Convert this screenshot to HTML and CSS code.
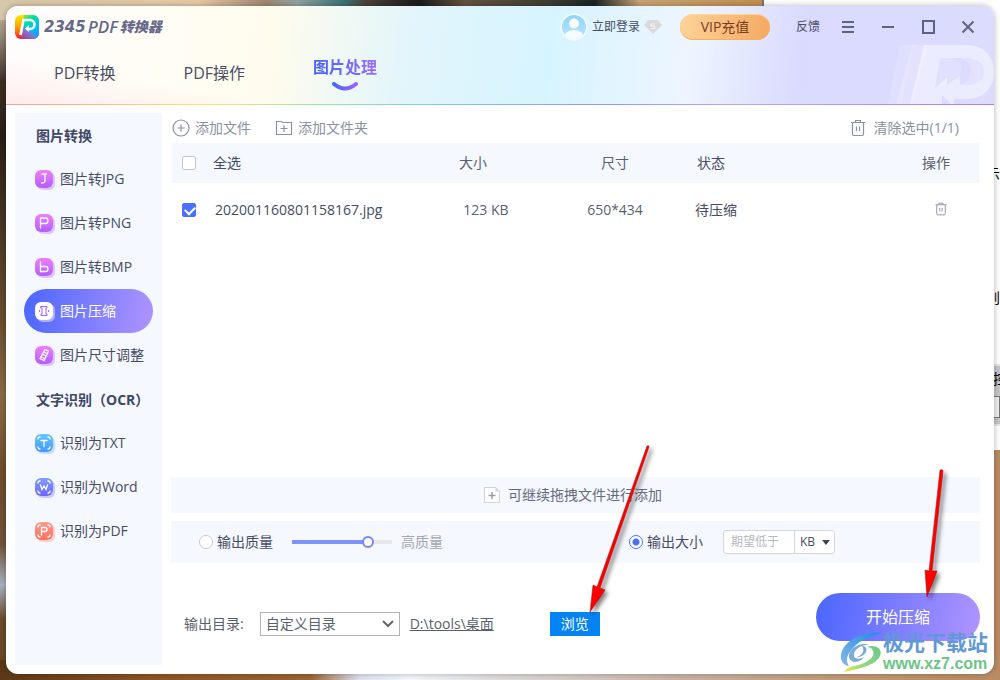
FILE: index.html
```html
<!DOCTYPE html>
<html lang="zh-CN">
<head>
<meta charset="utf-8">
<title>2345PDF转换器</title>
<link rel="stylesheet" href="styles.css">
</head>
<body>
<div class="back-window" aria-hidden="true">
  <span class="frag frag-a">【</span>
  <span class="frag frag-b">示</span>
  <span class="frag frag-c">则</span>
  <div class="back-panel"><span class="frag-d">控</span><i></i></div>
</div>
<div class="app">
  <header class="header">
    <svg class="header-art" width="110" height="59" viewBox="0 0 110 59" aria-hidden="true">
      <g fill="#fff">
        <path opacity=".12" d="M16 0H30L18 59H4Z"/>
        <path opacity=".2" d="M28 0H44L28 59H12Z"/>
        <path opacity=".45" fill-rule="evenodd" d="M40 0H83C99 0 110 11 110 27S99 54 83 54H70V59H67L58 50V59H26ZM56 13L51 44L63 32V40L76 31V40H83C93 40 100 35 100 27S93 13 83 13Z"/>
        <path opacity=".15" d="M56 13H68C82 15 80 36 64 39L51 44Z"/>
        <path opacity=".2" d="M76 13H83C93 13 100 19 100 27S93 40 84 40H76C90 36 91 18 76 13Z"/>
      </g>
    </svg>
    <div class="titlebar">
      <svg class="logo" width="24" height="24" viewBox="0 0 24 24" aria-hidden="true">
        <defs>
          <linearGradient id="lg1" x1="0" y1="0" x2="0" y2="1"><stop offset="0" stop-color="#ffe600"/><stop offset=".5" stop-color="#ffa400"/><stop offset="1" stop-color="#ff1226"/></linearGradient>
          <linearGradient id="lg2" x1="0" y1="0" x2=".6" y2="1"><stop offset="0" stop-color="#c8e800"/><stop offset=".35" stop-color="#00e0a0"/><stop offset=".75" stop-color="#00bdf5"/><stop offset="1" stop-color="#169cff"/></linearGradient>
          <linearGradient id="lg3" x1="0" y1="1" x2="1" y2="0"><stop offset="0" stop-color="#f2124c"/><stop offset=".5" stop-color="#8a70d8"/><stop offset="1" stop-color="#20b8f8"/></linearGradient>
        </defs>
        <rect width="24" height="24" rx="6" fill="url(#lg1)"/>
        <path d="M9 0H18a6 6 0 0 1 6 6V18a6 6 0 0 1-6 6H6Z" fill="url(#lg2)"/>
        <path d="M5 24L9 11L22 22Q20 24 17 24Z" fill="url(#lg3)" opacity=".85"/>
        <path d="M5.500 20L8.500 5M7 5H15A4.500 4.500 0 0 1 15 14H13" fill="none" stroke="#fff" stroke-width="2.600"/>
        <path d="M14 10V17L10 13.500Z" fill="#fff"/>
      </svg>
      <h1 class="brand"><span class="brand-num">2345</span><span class="brand-pdf">PDF</span><span class="brand-cn">转换器</span></h1>
      <button class="login" type="button">
        <svg width="28" height="28" viewBox="0 0 28 28" aria-hidden="true">
          <defs><linearGradient id="av" x1="0" y1="0" x2="0" y2="1"><stop offset="0" stop-color="#8fd3ff"/><stop offset="1" stop-color="#b9e6ff"/></linearGradient><clipPath id="avc"><circle cx="14" cy="14" r="12"/></clipPath></defs>
          <circle cx="14" cy="14" r="13.500" fill="#f4fcff"/><circle cx="14" cy="14" r="12" fill="url(#av)"/>
          <g clip-path="url(#avc)" fill="#f6fcff"><circle cx="14" cy="10.500" r="5"/><ellipse cx="14" cy="25" rx="10" ry="8"/></g>
        </svg>
        <span>立即登录</span>
        <svg width="18" height="14" viewBox="0 0 18 14" aria-hidden="true"><path d="M4 0H14L18 5L9 14L0 5Z" fill="#d9d9d9"/><path d="M11 4H8Q6.500 4 7 5.500L10.500 6.500Q11.500 8.500 9.500 8.500H7" fill="none" stroke="#f4f4f4" stroke-width="1.200"/></svg>
      </button>
      <button class="vip" type="button">VIP充值</button>
      <button class="feedback" type="button">反馈</button>
      <div class="controls">
        <button type="button" aria-label="菜单"><svg width="14" height="14" viewBox="0 0 14 14"><path d="M1 2H13M1 7H13M1 12H13"/></svg></button>
        <button type="button" aria-label="最小化"><svg width="14" height="14" viewBox="0 0 14 14"><path d="M1 7H13"/></svg></button>
        <button type="button" aria-label="最大化"><svg width="14" height="14" viewBox="0 0 14 14"><path d="M2 1H13V13H2Z"/></svg></button>
        <button type="button" aria-label="关闭"><svg width="14" height="14" viewBox="0 0 14 14"><path d="M1.500 1.500L12.500 12.500M12.500 1.500L1.500 12.500"/></svg></button>
      </div>
    </div>
    <nav class="tabs">
      <button class="tab" type="button">PDF转换</button>
      <button class="tab" type="button">PDF操作</button>
      <button class="tab tab-active" type="button"><span>图片处理</span>
        <svg width="28" height="10" viewBox="0 0 28 10" aria-hidden="true"><defs><linearGradient id="sm"><stop offset="0" stop-color="#4566ff"/><stop offset="1" stop-color="#9a66ff"/></linearGradient></defs><path d="M3 2Q14 11 25 2" fill="none" stroke="url(#sm)" stroke-width="4" stroke-linecap="round"/></svg>
      </button>
    </nav>
  </header>
  <div class="body">
    <aside class="sidebar">
      <h2>图片转换</h2>
      <button class="item" type="button"><svg class="ico ico-purple" viewBox="0 0 18 18"><path d="M7 4H11.500M10 4V10.500Q10 13 6.500 13"/></svg>图片转JPG</button>
      <button class="item" type="button"><svg class="ico ico-purple" viewBox="0 0 18 18"><path d="M5.500 14V4H10.500Q13 4 13 6.700T10.500 9.500H5.500"/></svg>图片转PNG</button>
      <button class="item" type="button"><svg class="ico ico-purple" viewBox="0 0 18 18"><path d="M5.500 4V13.500H10.500Q13 13.500 13 11T10.500 8.500H5.500"/></svg>图片转BMP</button>
      <button class="item item-active" type="button"><svg class="ico ico-white" viewBox="0 0 18 18"><path d="M6 4.500H12V6H11V12H12V13.500H6V12H7V6H6ZM4.500 8.500V9.500M13.500 8.500V9.500"/></svg>图片压缩</button>
      <button class="item" type="button"><svg class="ico ico-purple" viewBox="0 0 18 18"><path d="M10 3.500L13.500 5L9 14.500L5 12.500ZM9 6L11 7M8 8.500L10 9.500M6.500 11L8.500 12"/></svg>图片尺寸调整</button>
      <h2>文字识别（OCR）</h2>
      <button class="item" type="button"><svg class="ico ico-sky" viewBox="0 0 18 18"><path d="M3 5Q3 3 5 3M13 3Q15 3 15 5M15 13Q15 15 13 15M5 15Q3 15 3 13M6 6.500H12M9 6.500V12.500"/></svg>识别为TXT</button>
      <button class="item" type="button"><svg class="ico ico-indigo" viewBox="0 0 18 18"><path d="M3 5Q3 3 5 3M13 3Q15 3 15 5M15 13Q15 15 13 15M5 15Q3 15 3 13M5.500 7L7 11.500L9 8L11 11.500L12.500 7"/></svg>识别为Word</button>
      <button class="item" type="button"><svg class="ico ico-coral" viewBox="0 0 18 18"><path d="M3 5Q3 3 5 3M13 3Q15 3 15 5M15 13Q15 15 13 15M5 15Q3 15 3 13M6.500 13V5.500H10Q12 5.500 12 7.500T10 9.500H6.500"/></svg>识别为PDF</button>
    </aside>
    <main class="main">
      <div class="toolbar">
        <button type="button"><svg width="18" height="18" viewBox="0 0 18 18"><circle cx="9" cy="9" r="8"/><path d="M5.500 9H12.500M9 5.500V12.500"/></svg>添加文件</button>
        <button type="button"><svg width="18" height="18" viewBox="0 0 18 18"><path d="M1.500 2.500H6.500L8 3.500H16.500V15.500H1.500ZM5.500 9.500H12.500M9 6V13"/></svg>添加文件夹</button>
        <button class="clear" type="button"><svg width="16" height="18" viewBox="0 0 16 18"><path d="M1 3.500H15M5.500 3V1.500H10.500V3M2.500 4V15Q2.500 16.500 4 16.500H12Q13.500 16.500 13.500 15V4M6.500 7.500V12M9.500 7.500V12"/></svg>清除选中(1/1)</button>
      </div>
      <table class="files">
        <colgroup><col class="c-check"><col><col class="c-size"><col class="c-dim"><col class="c-state"><col class="c-op"></colgroup>
        <thead>
          <tr><th><input type="checkbox" id="all" aria-label="全选"></th><th class="l"><label for="all">全选</label></th><th class="size">大小</th><th>尺寸</th><th class="l state">状态</th><th>操作</th></tr>
        </thead>
        <tbody>
          <tr><td><input type="checkbox" id="f1" checked></td><td class="l"><label for="f1">202001160801158167.jpg</label></td><td class="size">123 KB</td><td>650*434</td><td class="l state">待压缩</td><td class="op"><button type="button" aria-label="删除"><svg width="14" height="14" viewBox="0 0 16 18"><path d="M1 3.500H15M5.500 3V1.500H10.500V3M2.500 4V15Q2.500 16.500 4 16.500H12Q13.500 16.500 13.500 15V4M6.500 7.500V12M9.500 7.500V12"/></svg></button></td></tr>
        </tbody>
      </table>
      <button class="drop" type="button"><svg width="16" height="16" viewBox="0 0 16 16"><path d="M.500 .500H12L15.500 4V15.500H.500Z" fill="#fff" stroke="#cfd2d8"/><path d="M11.500 .500V4.500H15.500Z" fill="#cfd2d8"/><path d="M4.500 8.500H11.500M8 5V12" stroke="#9a9da8" stroke-width="1.500"/></svg>可继续拖拽文件进行添加</button>
      <div class="options">
        <div class="group">
          <input type="radio" name="mode" id="quality"><label for="quality">输出质量</label>
          <input class="slider" type="range" min="0" max="100" value="79" aria-label="质量"><span class="muted">高质量</span>
        </div>
        <div class="group">
          <input type="radio" name="mode" id="size" checked><label for="size">输出大小</label>
          <div class="limit">
            <input type="text" placeholder="期望低于" aria-label="期望低于">
            <div class="pick"><select aria-label="单位"><option>KB</option><option>MB</option></select><svg width="8" height="5" viewBox="0 0 8 5"><path d="M0 0H8L4 5Z" fill="#3d4257"/></svg></div>
          </div>
        </div>
      </div>
      <footer class="footer">
        <div class="output">
          <label for="dir">输出目录:</label>
          <div class="pick pick-dir"><select id="dir"><option>自定义目录</option><option>原文件目录</option></select><svg width="12" height="8" viewBox="0 0 12 8"><path d="M1 1L6 6L11 1" fill="none" stroke="#666" stroke-width="2"/></svg></div>
          <a href="#">D:\tools\桌面</a>
          <button class="browse" type="button">浏览</button>
        </div>
        <button class="start" type="button">开始压缩</button>
      </footer>
    </main>
  </div>
</div>
<svg class="arrows" width="400" height="250" viewBox="0 0 400 250" aria-hidden="true">
  <g fill="#f00" stroke="#a00808" stroke-width=".5">
    <path d="M65 16Q67 15 67 17L18 158L23 160L8 182L11 155L15 157Z"/>
    <path d="M358 40Q361 39 361 41L350 141L355 141L345 167L343 140L347 141Z"/>
  </g>
</svg>
<div class="site-mark" aria-hidden="true">
  <svg width="42" height="40" viewBox="0 0 42 40">
    <defs><linearGradient id="sw1" x1="1" y1="0" x2="0" y2="1"><stop offset="0" stop-color="#168de0"/><stop offset="1" stop-color="#8bb8e8"/></linearGradient><linearGradient id="sw2" x1="1" y1="0" x2="0" y2="1"><stop offset="0" stop-color="#6ac78c"/><stop offset=".6" stop-color="#94d682"/><stop offset="1" stop-color="#f5e83c"/></linearGradient></defs>
    <path d="M42 1C20-1 3 10 1 23C0 29 4 34 9 34C5 29 7 22 13 16C20 8 30 4 42 1Z" fill="url(#sw1)"/>
    <path d="M30 13C20 9 8 17 9 25C10 31 19 32 24 25C19 28 13 27 14 22C15 16 24 12 30 13Z" fill="#7aa9dc"/>
    <path d="M22 14C30 14 27 25 17 25C23 23 25 18 22 14Z" fill="#7aa9dc"/>
    <path d="M26 15C36 12 43 17 40 24C37 32 24 36 4 40C7 36 10 35 14 34C26 32 36 25 33 19C32 16 30 15 26 15Z" fill="url(#sw2)"/>
  </svg>
  <div><p class="mark-cn">极光下载站</p><p class="mark-url">www.xz7.com</p></div>
</div>
</body>
</html>
```
FILE: styles.css
```css
* { box-sizing: border-box; }
body {
  margin: 0; padding: 6px; min-height: 100vh; display: flex; position: relative; overflow: hidden;
  font: 14px/20px "Open Sans", "Noto Sans CJK SC", sans-serif; color: #474c63;
  background:
    linear-gradient(90deg, #d8c8ac, #e8cba6 26%, #a18672 35%, #92a4a2 39%, #3e7378 45%, #4b4239 48%, #1a1b1a 55%, #655340 61%, #3f3d34 72%, #1b2425 78%, #c9a476 84%, #c38f50) 0 0 / 762px 20px no-repeat,
    linear-gradient(90deg, #5b3817, #8f5425 15%, #9b6534 31%, #dfe4f0 36%, #f4faff 41%, #e0dcdd 50%, #c9b5a6 68%, #c19a77 85%, #b98c65) 0 100% / 100% 20px no-repeat,
    linear-gradient(90deg, transparent 50%, #b98c65 50%),
    linear-gradient(#d8c8ac, #8d8170 6%, #3f3025 12%, #2b1e14 20%, #54402a 38%, #6b4f31 48%, #8b6c47 58%, #6f4b2b 70%, #70543a 80%, #a9b3c2 86%, #6b4b2c 91%, #694722);
}
button, input, select { font: inherit; color: inherit; }
button { border: 0; background: none; padding: 0; cursor: pointer; }
svg { flex: none; display: block; }
h1, h2, p { margin: 0; }

.back-window { position: absolute; top: 0; right: 0; width: 238px; height: 450px; overflow: hidden; background: #fff; border-left: 2px solid #777; color: #000; }
.frag { position: absolute; right: 0; }
.frag-a { top: 24px; right: -7px; }
.frag-b { top: 164px; }
.frag-c { top: 288px; }
.back-panel { position: absolute; top: 364px; right: 0; width: 238px; height: 62px; background: #c6c6c6; border: solid #e6e6e6; border-width: 2px 0; }
.frag-d { position: absolute; right: -7px; top: 3px; }
.back-panel i { position: absolute; right: 0; top: 30px; width: 60px; height: 22px; border: 1px solid #777; background: #eee; }

.app { position: relative; flex: 1; min-width: 0; display: flex; flex-direction: column; background: #fff; border-radius: 12px; overflow: hidden; box-shadow: 0 0 6px rgba(0, 0, 0, .3); }
.header {
  position: relative;
  border-bottom: 1px solid; border-image: linear-gradient(90deg, #ff9c8a, #ffe07a 20%, #8cf09c 32%, #7ac8e8 45%, #8b9cf8 60%, #b4a8ff 75%, #b478f8) 1;
  background: linear-gradient(10deg, rgba(255, 232, 232, .8), rgba(255, 245, 240, 0) 18%), linear-gradient(97deg, #fffdfd, #fffdf2 20%, #fffcee 27%, #e2f5fb 41%, #d6f4ff 55%, #eef5ff 69%, #dadaff 80%, #dcdcff);
}
.header-art { position: absolute; right: 0; bottom: 0; }
.titlebar { position: relative; display: flex; align-items: center; height: 42px; padding: 0 19px 0 9px; }
.brand { display: flex; align-items: center; margin-left: 5px; color: #66698a; font-style: italic; line-height: 20px; }
.brand-num { font: italic bold 15px/20px "DejaVu Sans", sans-serif; }
.brand-pdf { font: italic 600 17px/20px "Open Sans", sans-serif; margin: 0 2px; }
.brand-cn { font-size: 14px; font-weight: 900; }
.login { display: flex; align-items: center; gap: 4px; margin-left: auto; font-size: 12px; }
.vip { width: 90px; height: 26px; margin-left: 18px; border-radius: 13px; background: linear-gradient(100deg, #fdd49a, #f4a862); box-shadow: inset 0 1px #ffd88c, inset 0 -1px #f2b264; color: #7a3b20; }
.feedback { margin-left: 26px; font-size: 12px; }
.controls { display: flex; gap: 26px; margin-left: 21px; }
.controls path { fill: none; stroke: #5d6384; stroke-width: 2; }
.tabs { position: relative; display: flex; gap: 68px; height: 56px; padding-left: 48px; align-items: flex-start; }
.tab { padding-top: 13px; font-size: 16px; line-height: 24px; color: #4a4d63; }
.tab-active { padding-top: 7px; display: flex; flex-direction: column; align-items: center; gap: 3px; font-weight: bold; }
.tab-active span { background: linear-gradient(90deg, #4262ff, #9a6cff); background-clip: text; -webkit-background-clip: text; color: transparent; }

.body { flex: 1; display: flex; gap: 9px; padding: 8px 14px 9px 9px; }
.sidebar { width: 147px; flex: none; padding: 0 9px; background: #f5f8ff; }
.sidebar h2 { padding-left: 12px; font-size: 14px; line-height: 46px; height: 44px; color: #3f4766; white-space: nowrap; }
.item { display: flex; align-items: center; gap: 7px; width: 100%; height: 44px; padding: 0 0 0 11px; border-radius: 22px; white-space: nowrap; }
.item-active { background: linear-gradient(100deg, #4a66ff, #b094ff); color: #fff; }
.ico { width: 18px; height: 18px; border-radius: 6px; fill: none; stroke: #fff; stroke-width: 1.3; stroke-linecap: round; }
.ico-purple { background: linear-gradient(#ee80f8, #b45cff); box-shadow: 2px 2px #e2c4fb; }
.ico-white { background: #fff; stroke: #a95cff; stroke-width: 1; box-shadow: 2px 2px #b0acff; }
.ico-sky { background: linear-gradient(#62c8f8, #4696ff); box-shadow: 2px 2px #bfdcff; }
.ico-indigo { background: linear-gradient(#809cff, #6a66fb); box-shadow: 2px 2px #c9cbff; }
.ico-coral { background: linear-gradient(#ff9a8c, #ff705e); box-shadow: 2px 2px #ffcfc9; }

.main { flex: 1; min-width: 0; display: flex; flex-direction: column; }
.toolbar { display: flex; gap: 24px; height: 30px; padding: 0 21px 0 1px; color: #8c90a3; }
.toolbar button { display: flex; align-items: center; gap: 5px; }
.toolbar .clear { margin-left: auto; gap: 8px; }
.toolbar path, .toolbar circle, .op path { fill: none; stroke: #8c90a3; stroke-width: 1.2; }
.files { margin: 0 1px; border-collapse: collapse; table-layout: fixed; }
.c-check { width: 35px; }
.c-size { width: 130px; }
.c-dim { width: 140px; }
.c-state { width: 208px; }
.c-op { width: 86px; }
.files th, .files td { padding: 0; text-align: center; font-weight: normal; color: #5b5f70; }
.files thead { background: #f5f8ff; }
.files th { height: 40px; }
.files td { height: 54px; }
.files .l { text-align: left; padding-left: 6px; color: #474c63; }
.files td.l { padding-left: 8px; }
.files th.size { padding-right: 14px; }
.files td.size { padding-left: 12px; }
.files th.state { padding-left: 12px; }
.files td.state { padding-left: 10px; }
.files td.op { padding: 0 0 3px 10px; }
.op button { display: block; margin: 0 auto; }
input[type=checkbox] { appearance: none; display: block; width: 14px; height: 14px; margin: 0 10px; border: 1px solid #c4c6cc; border-radius: 2px; background: #fff; }
input[type=checkbox]:checked { border-color: #4a70ff; background: #4a70ff; }
input[type=checkbox]:checked::before { content: ""; display: block; width: 8px; height: 5px; margin: 2px; border: solid #fff; border-width: 0 0 2px 2px; transform: rotate(-45deg); }
input[type=radio] { appearance: none; width: 14px; height: 14px; margin: 0; border: 1px solid #c8cad0; border-radius: 50%; background: #fff; }
input[type=radio]:checked { border-color: #4a70ff; background: radial-gradient(#4a70ff 3px, #fff 4px); }

.drop { display: flex; justify-content: center; align-items: center; gap: 8px; height: 36px; margin-top: auto; padding-right: 5px; background: #f5f8ff; color: #666a80; }
.options { display: grid; grid-template-columns: 430px 1fr; height: 42px; margin-top: 8px; padding-left: 28px; background: #f5f8ff; }
.group { display: flex; align-items: center; gap: 4px; }
.muted { color: #a3a6b0; }
.slider { appearance: none; width: 100px; height: 12px; margin: 0 5px 0 15px; background: linear-gradient(90deg, #7c93ff 75%, #e8e8ea 75%) center / 100% 4px no-repeat; }
.slider::-webkit-slider-thumb { appearance: none; width: 12px; height: 12px; border: 2px solid #6f88ff; border-radius: 50%; background: #fff; }
.limit { display: flex; height: 24px; width: 112px; margin-left: 16px; border: 1px solid #d4d6dc; border-radius: 3px; background: #fff; font-size: 12px; }
.limit input { width: 71px; padding: 0 7px; border: 0; border-right: 1px solid #d4d6dc; background: none; }
.limit input::placeholder { color: #b4b7c2; }
.pick { display: grid; flex: 1; align-items: center; }
.pick select, .pick svg { grid-area: 1 / 1; }
.pick select { appearance: none; width: 100%; height: 100%; padding: 0 5px; border: 0; background: none; }
.pick svg { justify-self: end; margin-right: 4px; pointer-events: none; }

.footer { display: flex; justify-content: space-between; align-items: flex-end; padding: 30px 0 24px 13px; }
.output { display: flex; align-items: center; height: 24px; margin-bottom: 5px; color: #5b5f6c; }
.pick-dir { width: 140px; flex: none; height: 24px; margin: 0 10px 0 16px; border: 1px solid #b4b4b4; background: #fff; }
.pick-dir svg { margin-right: 5px; }
.output a { color: inherit; }
.browse { width: 50px; height: 24px; margin-left: 56px; background: #0484f4; color: #fff; }
.start { width: 164px; height: 48px; border-radius: 24px; background: linear-gradient(100deg, #4a66ff, #b094ff); color: #fff; font-size: 16px; }

.arrows { position: absolute; right: 18px; bottom: 0; pointer-events: none; filter: drop-shadow(3px 3px 2px rgba(0, 0, 0, .5)); }
.site-mark { position: absolute; right: 12px; bottom: 8px; display: flex; align-items: flex-end; gap: 1px; pointer-events: none; }
.mark-cn { margin-bottom: 2px; font-size: 21px; line-height: 24px; font-weight: bold; color: #6099d6; }
.mark-url { font: bold 16px/16px "Liberation Sans", sans-serif; color: #6cc486; }
```
